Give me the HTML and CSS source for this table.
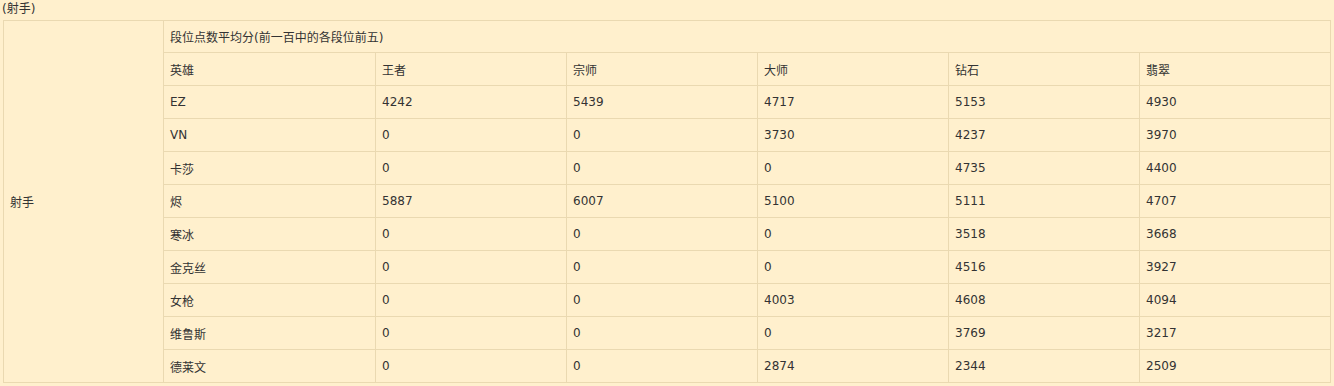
FILE: index.html
```html
<!DOCTYPE html>
<html>
<head>
<meta charset="utf-8">
<link rel="stylesheet" href="styles.css">
</head>
<body>
<div class="title">(射手)</div>
<table class="stats">
  <colgroup>
    <col class="c-role"><col class="c-hero"><col class="c-rank"><col class="c-rank"><col class="c-rank"><col class="c-rank"><col class="c-rank">
  </colgroup>
  <tr class="head"><td rowspan="11">射手</td><td colspan="6">段位点数平均分(前一百中的各段位前五)</td></tr>
  <tr><td>英雄</td><td>王者</td><td>宗师</td><td>大师</td><td>钻石</td><td>翡翠</td></tr>
  <tr><td>EZ</td><td>4242</td><td>5439</td><td>4717</td><td>5153</td><td>4930</td></tr>
  <tr><td>VN</td><td>0</td><td>0</td><td>3730</td><td>4237</td><td>3970</td></tr>
  <tr><td>卡莎</td><td>0</td><td>0</td><td>0</td><td>4735</td><td>4400</td></tr>
  <tr><td>烬</td><td>5887</td><td>6007</td><td>5100</td><td>5111</td><td>4707</td></tr>
  <tr><td>寒冰</td><td>0</td><td>0</td><td>0</td><td>3518</td><td>3668</td></tr>
  <tr><td>金克丝</td><td>0</td><td>0</td><td>0</td><td>4516</td><td>3927</td></tr>
  <tr><td>女枪</td><td>0</td><td>0</td><td>4003</td><td>4608</td><td>4094</td></tr>
  <tr><td>维鲁斯</td><td>0</td><td>0</td><td>0</td><td>3769</td><td>3217</td></tr>
  <tr><td>德莱文</td><td>0</td><td>0</td><td>2874</td><td>2344</td><td>2509</td></tr>
</table>
</body>
</html>
```
FILE: styles.css
```css
html, body {
  margin: 0;
  padding: 0;
  background: #fff0cd;
}
body {
  font-family: "DejaVu Sans", "Noto Sans CJK SC", sans-serif;
  font-size: 12px;
  color: #333;
  padding: 0 1px;
}
.title {
  height: 20px;
  line-height: 18px;
  padding-left: 1px;
}
.stats {
  margin-left: 2px;
  width: 1326px;
  border-collapse: collapse;
  table-layout: fixed;
  border: 1px solid #e3d2a8;
}
.stats td {
  border: 1px solid #ead9b1;
  height: 32px;
  padding: 0 6px;
  vertical-align: middle;
  white-space: nowrap;
}
.stats .head td {
  height: 31px;
}
.c-role { width: 160px; }
.c-hero { width: 212px; }
.c-rank { width: 191px; }
```
